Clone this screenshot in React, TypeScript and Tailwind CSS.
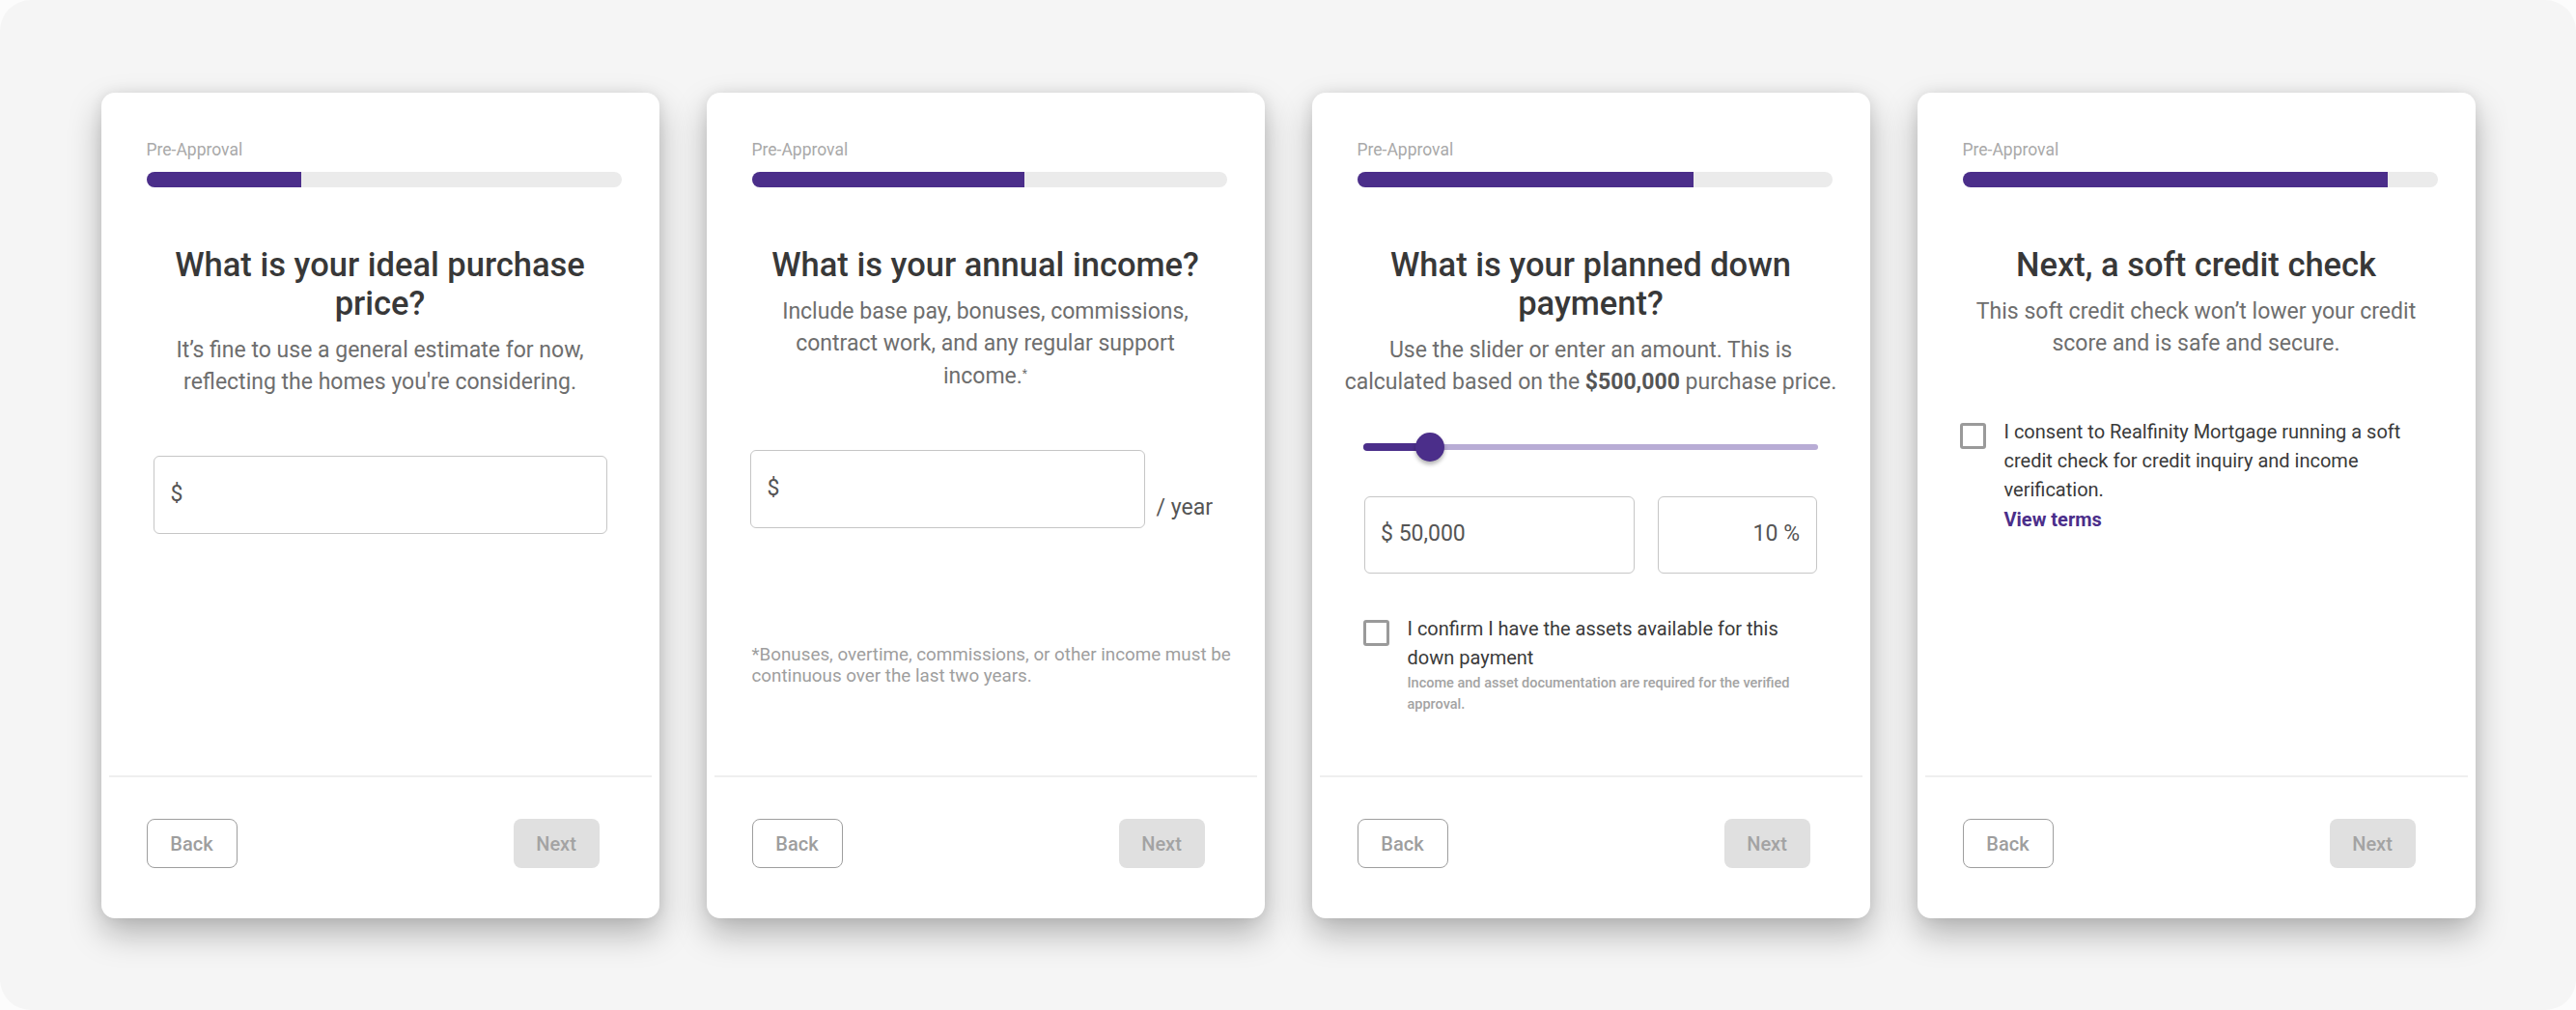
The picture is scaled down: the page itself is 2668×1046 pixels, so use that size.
import React from "react";

const Card = ({
  fill,
  title,
  subtitle,
  children,
}: {
  fill: number;
  title: React.ReactNode;
  subtitle: React.ReactNode;
  children?: React.ReactNode;
}) => (
  <div className="w-[578px] h-[855px] shrink-0 rounded-[14px] bg-white flex flex-col shadow-[0_16px_34px_rgba(0,0,0,0.27),0_0_14px_rgba(0,0,0,0.08)]">
    <div className="pl-[47px] pr-[39px] pt-[49px]">
      <div className="text-[17.5px] leading-[20px] text-[#a9a9a9]">Pre-Approval</div>
      <div className="mt-[13px] h-4 rounded-full bg-[#ebebeb] overflow-hidden">
        <div className="h-full bg-[#4b2e8a]" style={{ width: fill }} />
      </div>
    </div>
    <h2 className="mt-[60px] text-center text-[34.5px] leading-[40px] font-medium text-[#383838] whitespace-nowrap">
      {title}
    </h2>
    <p className="mt-[12px] text-center text-[23px] leading-[33.3px] text-[#6e6e6e] whitespace-nowrap">
      {subtitle}
    </p>
    {children}
    <div className="mt-auto">
      <div className="mx-[8px] h-[2px] bg-[#efefef]" />
      <div className="flex justify-between pt-[43px] pb-[52px] pl-[47px] pr-[62px]">
        <button className="w-[94px] h-[51px] rounded-[8px] border-[1.5px] border-[#9e9e9e] text-[20px] font-medium text-[#9e9e9e]">
          Back
        </button>
        <button className="w-[89px] h-[51px] rounded-[8px] bg-[#e0e0e0] text-[20px] font-medium text-[#a3a3a3]">
          Next
        </button>
      </div>
    </div>
  </div>
);

const Checkbox = () => (
  <div className="mt-[6px] w-[27px] h-[27px] shrink-0 rounded-[3px] border-[3px] border-[#9a9a9a]" />
);

export default function App() {
  return (
    <div className="w-[2668px] h-[1046px] bg-[#fcfcfc] font-['Roboto',sans-serif]">
      <div className="h-full rounded-[32px] bg-[#f5f5f5] flex justify-center gap-[49px] pt-[96px]">
        <Card
          fill={160}
          title={
            <>
              What is your ideal purchase
              <br />
              price?
            </>
          }
          subtitle={
            <>
              It’s fine to use a general estimate for now,
              <br />
              reflecting the homes you're considering.
            </>
          }
        >
          <div className="mt-[59px] mx-auto w-[470px] h-[81px] rounded-[6px] border-[1.5px] border-[#c6c6c6] flex items-center pl-[17px] text-[23px] text-[#555]">
            $
          </div>
        </Card>

        <Card
          fill={282}
          title={<>What is your annual income?</>}
          subtitle={
            <>
              Include base pay, bonuses, commissions,
              <br />
              contract work, and any regular support
              <br />
              income.<sup className="text-[12px]">*</sup>
            </>
          }
        >
          <div className="mt-[60px] pl-[45px] flex items-end gap-[12px]">
            <div className="w-[409px] h-[81px] rounded-[6px] border-[1.5px] border-[#c6c6c6] flex items-center pl-[17px] text-[23px] text-[#555]">
              $
            </div>
            <div className="pb-[6px] text-[23px] leading-[30px] text-[#555]">/ year</div>
          </div>
          <p className="mt-[120px] pl-[47px] text-[18.8px] leading-[22px] text-[#9e9e9e] whitespace-nowrap">
            *Bonuses, overtime, commissions, or other income must be
            <br />
            continuous over the last two years.
          </p>
        </Card>

        <Card
          fill={348}
          title={
            <>
              What is your planned down
              <br />
              payment?
            </>
          }
          subtitle={
            <>
              Use the slider or enter an amount. This is
              <br />
              calculated based on the <span className="font-bold text-[#555]">$500,000</span> purchase price.
            </>
          }
        >
          <div className="mt-[35px] mx-auto w-[471px] h-[30px] relative">
            <div className="absolute left-0 right-0 top-[12px] h-[6px] rounded-full bg-[#b8acd5]" />
            <div className="absolute left-0 top-[11px] h-[8px] w-[69px] rounded-full bg-[#4b2e8a]" />
            <div className="absolute left-[54px] top-0 w-[30px] h-[30px] rounded-full bg-[#4b2e8a] shadow-[0_3px_4px_rgba(0,0,0,0.3)]" />
          </div>
          <div className="mt-[36px] mx-auto w-[469px] flex gap-[24px]">
            <div className="w-[280px] h-[80px] rounded-[6px] border-[1.5px] border-[#c6c6c6] flex items-center pl-[16px] text-[23px] text-[#555]">
              $ 50,000
            </div>
            <div className="flex-1 h-[80px] rounded-[6px] border-[1.5px] border-[#c6c6c6] flex items-center justify-end pr-[17px] text-[23px] text-[#555]">
              10 %
            </div>
          </div>
          <div className="mt-[42px] pl-[53px] flex gap-[19px]">
            <Checkbox />
            <div>
              <div className="text-[20px] leading-[30px] text-[#3a3a3a] whitespace-nowrap">
                I confirm I have the assets available for this
                <br />
                down payment
              </div>
              <div className="mt-[1px] text-[14.5px] leading-[22px] font-medium text-[#a3a3a3] whitespace-nowrap">
                Income and asset documentation are required for the verified
                <br />
                approval.
              </div>
            </div>
          </div>
        </Card>

        <Card
          fill={440}
          title={<>Next, a soft credit check</>}
          subtitle={
            <>
              This soft credit check won’t lower your credit
              <br />
              score and is safe and secure.
            </>
          }
        >
          <div className="mt-[59px] pl-[44px] flex gap-[19px]">
            <Checkbox />
            <div>
              <div className="text-[20px] leading-[30px] text-[#3a3a3a] whitespace-nowrap">
                I consent to Realfinity Mortgage running a soft
                <br />
                credit check for credit inquiry and income
                <br />
                verification.
              </div>
              <div className="mt-[1px] text-[20px] leading-[30px] font-bold text-[#4b2e8a]">View terms</div>
            </div>
          </div>
        </Card>
      </div>
    </div>
  );
}
